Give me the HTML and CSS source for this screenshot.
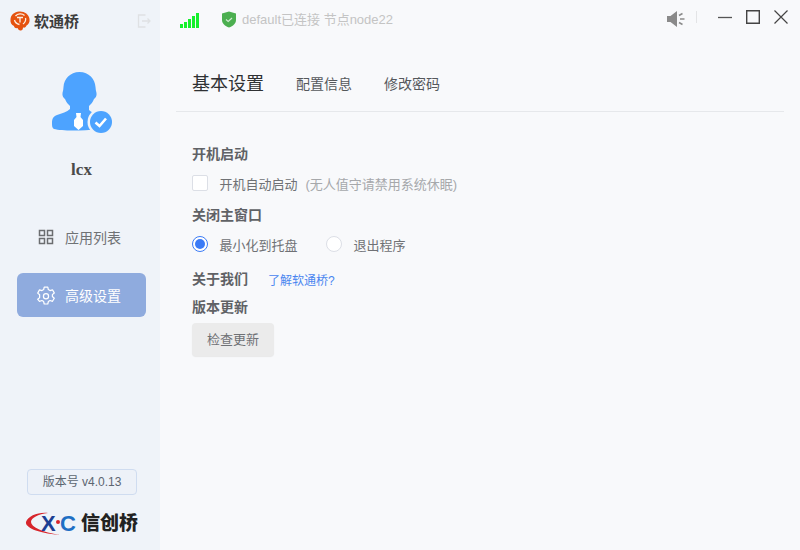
FILE: index.html
```html
<!DOCTYPE html>
<html lang="zh-CN">
<head>
<meta charset="utf-8">
<title>软通桥</title>
<link rel="stylesheet" href="styles.css">
</head>
<body>
<div class="app">
  <aside class="sidebar">
    <div class="brand">
      <svg class="brand-logo" viewBox="0 0 20 20" width="20" height="20">
        <path d="M9 .5C14 0 19 3 19.500 8 20 11 18.500 13.500 16.500 14.500 16 16 15 17 13 16.500 13 18.500 12 20 10 19.500 8.500 19 8 18 7.500 17 5.500 17.500 4 16.500 4 15 1.500 14 0 11.500.5 8 1 3.500 4.500 1 9 .5z" fill="#e5520f"/>
        <path d="M5.500 5C7.500 2.500 12 2 14.500 4.500M4.500 9C5 11.500 7 13 9.500 13.500M15.500 7C16 9 15 11.500 13 13M7 6.500h6M10 6.500v5" stroke="#fdeee0" stroke-width="1.300" fill="none"/>
      </svg>
      <span class="brand-name">软通桥</span>
      <svg class="exit-icon" viewBox="0 0 14 14" width="14" height="14">
        <path d="M8.500 1H1.500v12h7M5 7h8M10.500 4.500 13 7l-2.500 2.500" stroke="#dfe1e4" stroke-width="1.300" fill="none"/>
      </svg>
    </div>
    <div class="avatar">
      <svg viewBox="0 0 62 64" width="62" height="64">
        <path d="M27.500 1C37 1 43 8 43.500 16 43.500 18 44 20 44.500 22 45 25 43.500 27 42 28 41 31 39 33 37 35V39C39 41 41 41.500 44 42.500L46 58C30 60 10 60 2 58 0 57 0 55 0 52 0 47 2 45 5 44 10 42 15 41 18 38V35C16 33 14 31 13 28 11.500 27 10 25 10.500 22 11 20 11.500 18 11.500 16 12 8 18 1 27.500 1z" fill="#4da3ff"/>
        <path d="M24 42h5l-.5 4 2.500 3v6l-4.500 4-4.500-4v-6l2.500-3z" fill="#fff"/>
        <circle cx="49" cy="51" r="13.500" fill="#eff3f9"/>
        <circle cx="49" cy="51" r="11" fill="#4da3ff"/>
        <path d="M43.500 51.500l4 3.500 6.500-7.500" stroke="#fff" stroke-width="2.600" fill="none"/>
      </svg>
    </div>
    <div class="user-name">lcx</div>
    <nav class="nav">
      <a class="nav-item">
        <svg viewBox="0 0 16 16" width="16" height="16"><path d="M1.500 1.500h5v5h-5zM9.500 1.500h5v5h-5zM1.500 9.500h5v5h-5zM9.500 9.500h5v5h-5z" stroke="#6b6d70" stroke-width="1.500" fill="none"/></svg>
        <span>应用列表</span>
      </a>
      <a class="nav-item active">
        <svg class="gear" viewBox="0 0 16 17" width="18" height="19"><path d="M6.400 1h3.200l.5 2.200 1.500.9 2.200-.7 1.600 2.800-1.700 1.500v1.700l1.700 1.500-1.600 2.800-2.200-.7-1.500.9-.5 2.200H6.400l-.5-2.200-1.500-.9-2.200.7L.6 11.900l1.700-1.500V7.900L.6 6.400 2.200 3.400l2.200.7 1.500-.9z" stroke="#fff" stroke-width="1.100" stroke-linejoin="round" fill="none"/><circle cx="8" cy="9.150" r="2.300" stroke="#fff" stroke-width="1.100" fill="none"/></svg>
        <span>高级设置</span>
      </a>
    </nav>
    <div class="sidebar-foot">
      <div class="version">版本号 v4.0.13</div>
      <div class="vendor">
        <svg class="vendor-mark" viewBox="0 0 50 24" width="50" height="24">
          <path d="M22 1C12 0 2 4 0 10-1 15 10 21 34 23 16 20 5 15 5 10 5 6 12 2 22 1z" fill="#d7252c"/>
          <text class="mark-x" x="15" y="19">X</text>
          <circle cx="32" cy="10" r="2" fill="#d7252c"/>
          <text class="mark-c" x="34" y="19">C</text>
        </svg>
        <span class="vendor-name">信创桥</span>
      </div>
    </div>
  </aside>
  <main class="main">
    <header class="topbar">
      <div class="signal"><i class="b1"></i><i class="b2"></i><i class="b3"></i><i class="b4"></i><i class="b5"></i></div>
      <svg class="shield" viewBox="0 0 16 17" width="16" height="17">
        <path d="M8 .5 15 2.500v6.500c0 3.500-3 6-7 7.500C4 15 1 12.500 1 9V2.500z" fill="#4caf50"/>
        <path d="M5 8.500l2.200 2L11 7" stroke="#cfe9d0" stroke-width="1.200" fill="none"/>
      </svg>
      <span class="status">default已连接 节点node22</span>
      <div class="win-controls">
        <svg class="speaker" viewBox="0 0 18 18" width="18" height="18">
          <path d="M0 6h3.500L10 1v16l-6.500-5H0z" fill="#8a8a8a"/>
          <path d="M12 5.500 15.500 3.500M13 9h4.500M12 12.500l3.500 2" stroke="#8a8a8a" stroke-width="1.500"/>
        </svg>
        <span class="sep"></span>
        <svg class="ctrl" viewBox="0 0 14 14" width="14" height="14"><path d="M0 7.500h14" stroke="#555" stroke-width="1.300"/></svg>
        <svg class="ctrl" viewBox="0 0 14 14" width="14" height="14"><path d="M.7.700h12.600v12.600H.7z" stroke="#444" stroke-width="1.400" fill="none"/></svg>
        <svg class="ctrl" viewBox="0 0 14 14" width="14" height="14"><path d="M.5.500l13 13M13.500.500l-13 13" stroke="#444" stroke-width="1.200"/></svg>
      </div>
    </header>
    <div class="tabs">
      <span class="tab current">基本设置</span>
      <span class="tab">配置信息</span>
      <span class="tab">修改密码</span>
    </div>
    <section class="settings">
      <h3 class="heading">开机启动</h3>
      <label class="option">
        <span class="checkbox"></span>
        <span class="opt-label">开机自动启动</span>
        <span class="opt-hint">(无人值守请禁用系统休眠)</span>
      </label>
      <h3 class="heading close">关闭主窗口</h3>
      <div class="radios">
        <label class="option"><span class="radio on"></span><span class="opt-label">最小化到托盘</span></label>
        <label class="option"><span class="radio"></span><span class="opt-label">退出程序</span></label>
      </div>
      <div class="about">
        <h3 class="heading">关于我们</h3>
        <a class="link">了解软通桥?</a>
      </div>
      <h3 class="heading update">版本更新</h3>
      <button class="btn">检查更新</button>
    </section>
  </main>
</div>
</body>
</html>
```
FILE: styles.css
```css
* { box-sizing: border-box; }
html, body { margin: 0; padding: 0; }
body {
  width: 800px;
  height: 550px;
  overflow: hidden;
  font-family: "Liberation Sans", "Noto Sans CJK SC", sans-serif;
  color: #606266;
}
.app { display: flex; width: 800px; height: 550px; background: #f8f9fb; }

/* sidebar */
.sidebar {
  width: 160px;
  height: 550px;
  background: #eff3f9;
  display: flex;
  flex-direction: column;
  align-items: center;
}
.brand {
  width: 160px;
  height: 42px;
  display: flex;
  align-items: center;
  padding-left: 10px;
}
.brand-logo { flex: none; }
.brand-name { margin: -2px 0 0 4px; font-size: 15px; font-weight: 700; color: #3d3d3d; }
.exit-icon { margin-left: auto; margin-right: 9px; }
.avatar { margin: 29px 0 0 6px; height: 64px; }
.avatar svg { display: block; }
.user-name {
  margin: 25px 0 0 3px;
  font-family: "Liberation Serif", serif;
  font-weight: 700;
  font-size: 17px;
  line-height: 20px;
  color: #4a4a4a;
}
.nav { margin: 35px 0 0 3px; display: flex; flex-direction: column; gap: 14px; }
.nav-item {
  width: 129px;
  height: 44px;
  border-radius: 6px;
  display: flex;
  align-items: center;
  gap: 11px;
  padding-left: 21px;
  font-size: 14px;
  color: #6f7275;
}
.nav-item svg { flex: none; }
.nav-item .gear { margin: 0 -1px; }
.nav-item.active { background: #8fabde; color: #fff; }
.sidebar-foot {
  margin-top: auto;
  display: flex;
  flex-direction: column;
  align-items: center;
  padding: 0 0 14px 4px;
}
.version {
  width: 110px;
  height: 26px;
  border: 1px solid #cfdcf0;
  border-radius: 4px;
  background: #edf1f8;
  font-size: 12px;
  line-height: 24px;
  text-align: center;
  color: #5c6570;
}
.vendor { margin-top: 16px; width: 112px; height: 25px; display: flex; align-items: center; justify-content: space-between; }
.vendor-mark { display: block; flex: none; overflow: visible; }
.mark-x { font: 700 22px "Liberation Sans", sans-serif; fill: #1c3f94; }
.mark-c { font: 700 22px "Liberation Sans", sans-serif; fill: #1f6fc4; }
.vendor-name { font-size: 19px; line-height: 24px; font-weight: 900; color: #222; }

/* main */
.main { flex: 1; display: flex; flex-direction: column; min-width: 0; }
.topbar { height: 40px; display: flex; align-items: center; padding-left: 20px; }
.signal { display: flex; align-items: flex-end; gap: 1px; width: 19px; height: 15px; flex: none; margin-top: 1px; }
.signal i { display: block; width: 3px; background: #16f02c; }
.signal .b1 { height: 4px; }
.signal .b2 { height: 6px; }
.signal .b3 { height: 9px; }
.signal .b4 { height: 12px; }
.signal .b5 { height: 15px; }
.shield { margin-left: 22px; flex: none; margin-top: -2px; }
.status { margin: -4px 0 0 5px; font-size: 13px; color: #c4c4c4; }
.win-controls { margin-left: auto; display: flex; align-items: center; padding-right: 12px; margin-top: -6px; }
.speaker { margin-right: 11px; margin-top: 4px; }
.sep { width: 1px; height: 12px; background: #e3e4e6; margin-right: 21px; }
.ctrl { margin-left: 14px; }
.sep + .ctrl { margin-left: 0; }

.tabs {
  margin: 0 16px;
  height: 72px;
  padding: 13px 0 0 16px;
  display: flex;
  align-items: center;
  gap: 32px;
  border-bottom: 1px solid #e6e8eb;
}
.tab { font-size: 14px; color: #55585c; padding-top: 1px; }
.tab.current { font-size: 18px; color: #2f3133; padding-top: 0; }

.settings { padding: 32px 32px 0; display: flex; flex-direction: column; align-items: flex-start; }
.heading { margin: 0; font-size: 14px; line-height: 20px; font-weight: 700; color: #606266; }
.option { display: flex; align-items: center; height: 20px; }
.settings > .option { margin-top: 9px; }
.checkbox { width: 16px; height: 16px; background: #fff; border: 1px solid #dcdfe6; border-radius: 2px; }
.opt-label { margin-left: 11.5px; font-size: 13px; color: #6f7175; }
.opt-hint { margin-left: 8px; font-size: 13px; color: #a6a8ab; }
.close { margin-top: 12px; }
.radios { display: flex; gap: 28.5px; margin-top: 9px; }
.radio { width: 16px; height: 16px; background: #fff; border: 1px solid #dcdfe6; border-radius: 50%; }
.radio.on { border-color: #3b7bf6; display: flex; align-items: center; justify-content: center; }
.radio.on::after { content: ""; width: 10px; height: 10px; border-radius: 50%; background: #3b7bf6; }
.about { display: flex; align-items: center; gap: 20px; margin-top: 15px; }
.link { font-size: 12px; color: #4a86f0; }
.update { margin-top: 8px; }
.btn {
  margin-top: 6px;
  width: 82px;
  height: 33px;
  padding: 0 0 2px;
  border: 0;
  border-radius: 4px;
  background: #ebebeb;
  box-shadow: 0 1px 1px #e8e8e8;
  font: 13px "Liberation Sans", "Noto Sans CJK SC", sans-serif;
  color: #6f7175;
}
```
